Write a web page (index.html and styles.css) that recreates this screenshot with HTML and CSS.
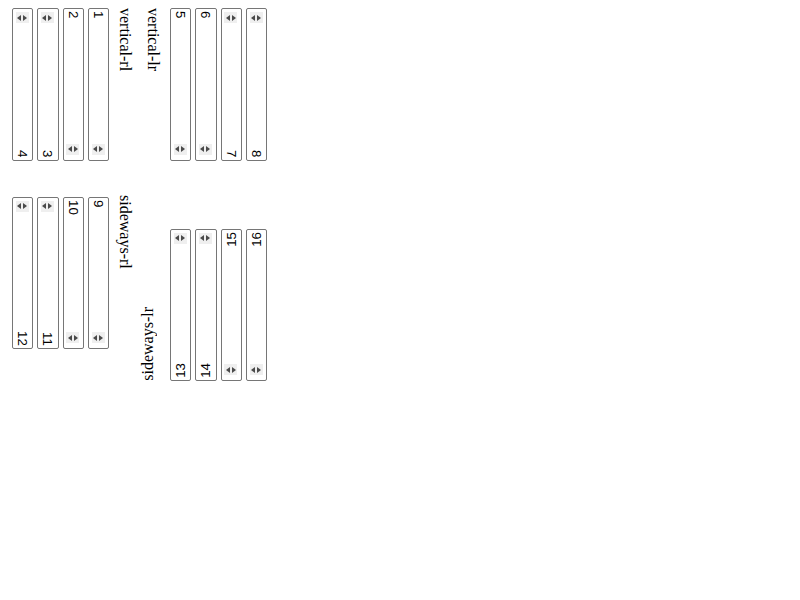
FILE: index.html
```html
<!DOCTYPE html>
<html>
<head>
<link rel="stylesheet" href="styles.css">
</head>
<body>
<div class="row row1">
  <div class="group ga">
    <div class="num rtl"><span class="spin"><i class="tl"></i><i class="tr"></i></span><span class="val">4</span></div>
    <div class="num rtl"><span class="spin"><i class="tl"></i><i class="tr"></i></span><span class="val">3</span></div>
    <div class="num"><span class="val">2</span><span class="spin"><i class="tl"></i><i class="tr"></i></span></div>
    <div class="num"><span class="val">1</span><span class="spin"><i class="tl"></i><i class="tr"></i></span></div>
    <span class="lbl">vertical-rl</span>
  </div>
  <div class="group gb">
    <span class="lbl">vertical-lr</span>
    <div class="num"><span class="val">5</span><span class="spin"><i class="tl"></i><i class="tr"></i></span></div>
    <div class="num"><span class="val">6</span><span class="spin"><i class="tl"></i><i class="tr"></i></span></div>
    <div class="num rtl"><span class="spin"><i class="tl"></i><i class="tr"></i></span><span class="val">7</span></div>
    <div class="num rtl"><span class="spin"><i class="tl"></i><i class="tr"></i></span><span class="val">8</span></div>
  </div>
</div>
<div class="row row2">
  <div class="group ga">
    <div class="num rtl"><span class="spin"><i class="tl"></i><i class="tr"></i></span><span class="val">12</span></div>
    <div class="num rtl"><span class="spin"><i class="tl"></i><i class="tr"></i></span><span class="val">11</span></div>
    <div class="num"><span class="val">10</span><span class="spin"><i class="tl"></i><i class="tr"></i></span></div>
    <div class="num"><span class="val">9</span><span class="spin"><i class="tl"></i><i class="tr"></i></span></div>
    <span class="lbl">sideways-rl</span>
  </div>
  <div class="group gb gd">
    <span class="lbl up">sideways-lr</span>
    <div class="num up rtl"><span class="spin"><i class="tl"></i><i class="tr"></i></span><span class="val">13</span></div>
    <div class="num up rtl"><span class="spin"><i class="tl"></i><i class="tr"></i></span><span class="val">14</span></div>
    <div class="num up"><span class="val">15</span><span class="spin"><i class="tl"></i><i class="tr"></i></span></div>
    <div class="num up"><span class="val">16</span><span class="spin"><i class="tl"></i><i class="tr"></i></span></div>
  </div>
</div>
</body>
</html>
```
FILE: styles.css
```css
body {
  margin: 8px;
  font-family: "Liberation Serif", serif;
  background: #fff;
}
.row {
  display: flex;
  align-items: flex-start;
}
.row2 {
  margin-top: 34px;
}
.group {
  display: flex;
  align-items: flex-start;
  gap: 4px;
}
.ga {
  padding-left: 4px;
}
.ga .lbl {
  margin-left: 2.67px;
}
.gb {
  margin-left: 10px;
}
.gb .lbl {
  margin-right: 4px;
}
.gd .lbl {
  margin-left: -5px;
  margin-right: 9px;
  margin-bottom: 1px;
}
.row2 .num {
  margin-top: 2px;
}
.gd {
  align-items: flex-end;
}
.gd .num {
  margin-top: 34px;
}
.lbl {
  writing-mode: vertical-rl;
  font-size: 16px;
  line-height: 18px;
  color: #000;
}
.lbl.up {
  transform: rotate(180deg);
}
.num {
  box-sizing: border-box;
  width: 21.33px;
  height: 152.67px;
  border: 1px solid #767676;
  border-radius: 2px;
  display: flex;
  flex-direction: column;
  justify-content: space-between;
  align-items: center;
  padding: 2px 0 4px;
  background: #fff;
}
.num.rtl {
  padding: 2px 0 2px;
}
.num.up:not(.rtl) {
  padding: 2px 0 4px;
}
.val {
  writing-mode: vertical-rl;
  font-family: "Liberation Sans", Arial, sans-serif;
  font-size: 13.33px;
  line-height: 15px;
  color: #000;
}
.num.up .val {
  transform: rotate(180deg);
}
.spin {
  display: flex;
  align-items: center;
  justify-content: center;
  gap: 2px;
  width: 13px;
  height: 11px;
  background: #efefef;
  margin: 1px 1px 1px 0;
}
.tl, .tr {
  display: block;
  width: 0;
  height: 0;
  border-top: 3.5px solid transparent;
  border-bottom: 3.5px solid transparent;
}
.tl {
  border-right: 4px solid #4a4a4a;
}
.tr {
  border-left: 4px solid #4a4a4a;
}
```
